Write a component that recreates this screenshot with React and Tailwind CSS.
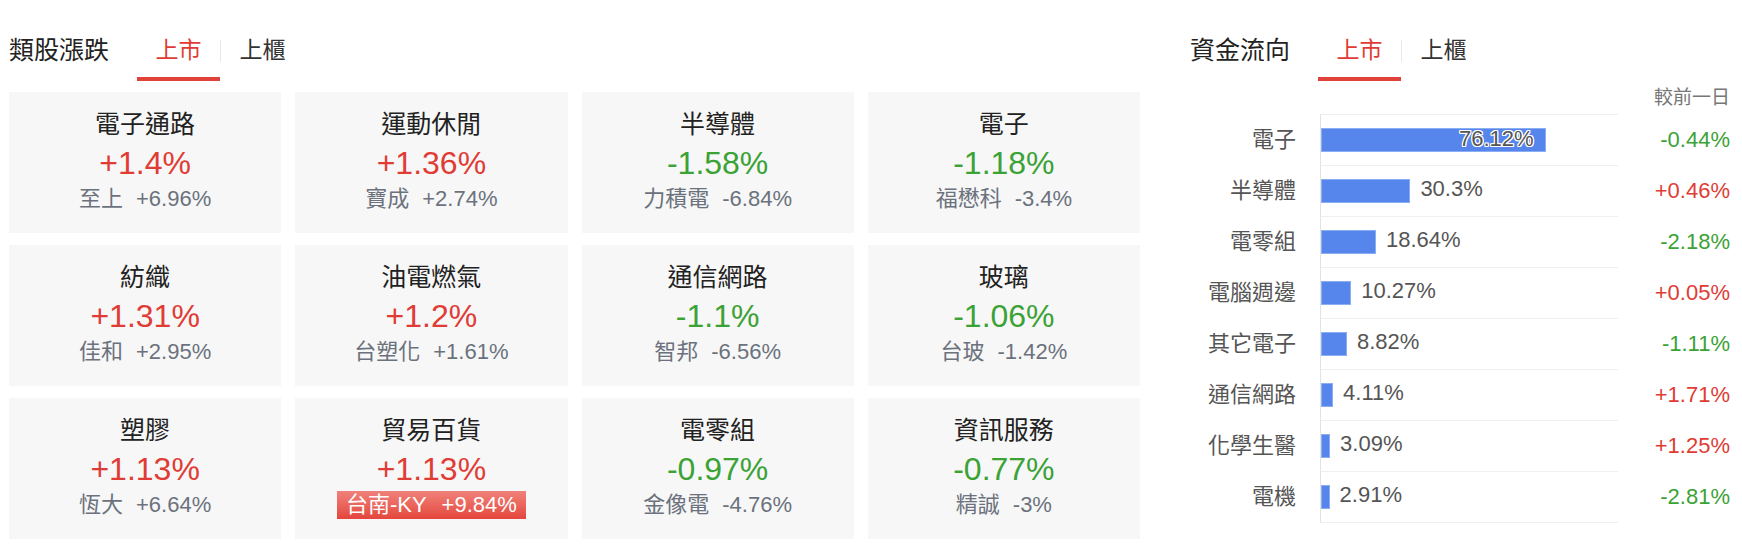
const sectors = [
  { name: "電子通路", pct: "+1.4%", stock: "至上", chg: "+6.96%" },
  { name: "運動休閒", pct: "+1.36%", stock: "寶成", chg: "+2.74%" },
  { name: "半導體", pct: "-1.58%", stock: "力積電", chg: "-6.84%" },
  { name: "電子", pct: "-1.18%", stock: "福懋科", chg: "-3.4%" },
  { name: "紡織", pct: "+1.31%", stock: "佳和", chg: "+2.95%" },
  { name: "油電燃氣", pct: "+1.2%", stock: "台塑化", chg: "+1.61%" },
  { name: "通信網路", pct: "-1.1%", stock: "智邦", chg: "-6.56%" },
  { name: "玻璃", pct: "-1.06%", stock: "台玻", chg: "-1.42%" },
  { name: "塑膠", pct: "+1.13%", stock: "恆大", chg: "+6.64%" },
  { name: "貿易百貨", pct: "+1.13%", stock: "台南-KY", chg: "+9.84%", limit: true },
  { name: "電零組", pct: "-0.97%", stock: "金像電", chg: "-4.76%" },
  { name: "資訊服務", pct: "-0.77%", stock: "精誠", chg: "-3%" },
];

const flows = [
  { name: "電子", share: 76.12, diff: "-0.44%" },
  { name: "半導體", share: 30.3, diff: "+0.46%" },
  { name: "電零組", share: 18.64, diff: "-2.18%" },
  { name: "電腦週邊", share: 10.27, diff: "+0.05%" },
  { name: "其它電子", share: 8.82, diff: "-1.11%" },
  { name: "通信網路", share: 4.11, diff: "+1.71%" },
  { name: "化學生醫", share: 3.09, diff: "+1.25%" },
  { name: "電機", share: 2.91, diff: "-2.81%" },
];

const upDown = (v) => (v.startsWith("-") ? "text-[#3ba235]" : "text-[#e03c35]");

function PanelHeader({ title }) {
  return (
    <div className="flex h-[81px] items-start">
      <div className="mt-[33px] mr-[28px] text-[25px] leading-[34px] text-[#222]">{title}</div>
      <div className="flex h-[81px] w-[83px] flex-col">
        <div className="mt-[33px] text-center text-[23px] leading-[34px] text-[#e03c35]">上市</div>
        <div className="mt-auto h-[4px] bg-[#e0423b]" />
      </div>
      <div className="mt-[40px] h-[22px] w-px bg-[#e8e8e8]" />
      <div className="mt-[33px] w-[83px] text-center text-[23px] leading-[34px] text-[#333]">上櫃</div>
    </div>
  );
}

function SectorCard({ s }) {
  return (
    <div className="flex h-[141px] flex-col items-center bg-[#f7f7f7] pt-[17px]">
      <div className="text-[25px] leading-[30px] text-[#222]">{s.name}</div>
      <div className={`text-[32px] leading-[49px] ${upDown(s.pct)}`}>{s.pct}</div>
      {s.limit ? (
        <div className="mt-[-3px] flex h-[28px] items-center bg-gradient-to-b from-[#ef817a] to-[#e4443c] px-[9px] text-[22px] leading-[28px] text-white">
          <span>{s.stock}</span>
          <span className="ml-[15px]">{s.chg}</span>
        </div>
      ) : (
        <div className="flex text-[22px] leading-[22px] text-[#6b727d]">
          <span>{s.stock}</span>
          <span className="ml-[13px]">{s.chg}</span>
        </div>
      )}
    </div>
  );
}

function FlowRow({ f, last }) {
  const inside = f.share > 50;
  return (
    <div className="flex items-center">
      <div className="mr-[24px] w-[106px] text-right text-[22px] leading-[30px] text-[#555]">{f.name}</div>
      <div
        className={`box-border flex h-[51px] w-[298px] items-center border-l border-t border-l-[#e2e2e2] border-t-[#efefef] ${
          last ? "h-[52px] border-b border-b-[#efefef]" : ""
        }`}
      >
        <div
          className="flex h-[24px] items-center justify-end border border-[#8aaef4] bg-[#5686ec]"
          style={{ width: `${f.share * 2.95}px` }}
        >
          {inside && (
            <span className="mr-[11px] mt-[-3px] text-[22px] leading-[24px] text-[#555] [text-shadow:1px_0_0_#fff,-1px_0_0_#fff,0_1px_0_#fff,0_-1px_0_#fff,1px_1px_0_#fff,-1px_-1px_0_#fff,1px_-1px_0_#fff,-1px_1px_0_#fff]">
              {f.share}%
            </span>
          )}
        </div>
        {!inside && (
          <span className="ml-[10px] mt-[-4px] text-[22px] leading-[24px] text-[#555]">{f.share}%</span>
        )}
      </div>
      <div className={`flex-1 text-right text-[22px] leading-[30px] ${upDown(f.diff)}`}>{f.diff}</div>
    </div>
  );
}

export default function App() {
  return (
    <div className="flex h-[546px] w-[1742px] bg-white font-['Liberation_Sans','Noto_Sans_CJK_TC',sans-serif]">
      <section className="ml-[9px] w-[1131px]">
        <PanelHeader title="類股漲跌" />
        <div className="mt-[11px] grid grid-cols-4 gap-x-[14px] gap-y-[12px]">
          {sectors.map((s) => (
            <SectorCard key={s.name} s={s} />
          ))}
        </div>
      </section>

      <section className="ml-[50px] w-[540px]">
        <PanelHeader title="資金流向" />
        <div className="h-[33px] text-right text-[19px] leading-[33px] text-[#777]">較前一日</div>
        <div className="flex flex-col">
          {flows.map((f, i) => (
            <FlowRow key={f.name} f={f} last={i === flows.length - 1} />
          ))}
        </div>
      </section>
    </div>
  );
}
